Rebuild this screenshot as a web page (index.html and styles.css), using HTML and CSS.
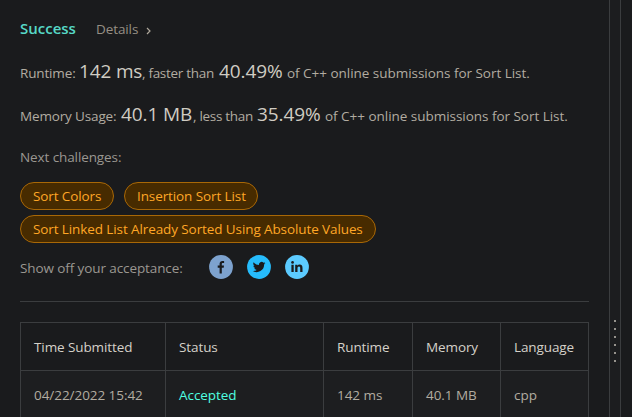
FILE: index.html
```html
<!DOCTYPE html>
<html lang="en">
<head>
<meta charset="utf-8">
<title>Submission result</title>
<link rel="stylesheet" href="styles.css">
</head>
<body>
<div class="layout">
  <main class="result">
    <header class="head"><span class="success">Success</span><a class="details">Details</a><svg class="chevron" width="6" height="8" viewBox="0 0 6 8"><path d="M1 1 4 4 1 7" fill="none" stroke="currentColor" stroke-width="1.2"/></svg></header>
    <p class="stat runtime"><span class="label">Runtime:</span><strong>142 ms</strong><span class="compare">, faster than</span><strong class="percent">40.49%</strong><span>of C++ online submissions for Sort List.</span></p>
    <p class="stat memory"><span class="label">Memory Usage:</span><strong>40.1 MB</strong><span class="compare">, less than</span><strong class="percent">35.49%</strong><span>of C++ online submissions for Sort List.</span></p>
    <p class="next">Next challenges:</p>
    <div class="tags">
      <a class="tag colors">Sort Colors</a>
      <a class="tag insertion">Insertion Sort List</a>
      <a class="tag linked">Sort Linked List Already Sorted Using Absolute Values</a>
    </div>
    <div class="share">
      <span class="share-label">Show off your acceptance:</span>
      <svg class="facebook" width="24" height="24" viewBox="0 0 24 24"><circle cx="12" cy="12" r="11.9"/><path class="glyph" d="M10.6 18.5v-5.8H8.7v-2.2h1.9V8.8c0-1.9 1.1-2.9 2.8-2.9.8 0 1.5.1 1.7.1v2h-1.2c-.9 0-1.1.5-1.1 1.1v1.4H15l-.3 2.2h-1.9v5.8z"/></svg>
      <svg class="twitter" width="24" height="24" viewBox="0 0 24 24"><circle cx="12" cy="12" r="11.9"/><path class="glyph" transform="translate(5.8 5.7) scale(.525)" d="M24 4.6a10 10 0 0 1-2.8.8 5 5 0 0 0 2.2-2.7 10 10 0 0 1-3.1 1.2 4.9 4.9 0 0 0-8.4 4.5A14 14 0 0 1 1.7 3.1 4.9 4.9 0 0 0 3.2 9.7a5 5 0 0 1-2.2-.6 4.9 4.9 0 0 0 3.9 4.9 5 5 0 0 1-2.2.1 4.9 4.9 0 0 0 4.6 3.4A9.9 9.9 0 0 1 0 19.5a14 14 0 0 0 21.5-12.4A10 10 0 0 0 24 4.6z"/></svg>
      <svg class="linkedin" width="24" height="24" viewBox="0 0 24 24"><circle cx="12" cy="12" r="11.9"/><path class="glyph" d="M6.400 9.800h2.300v7.100H6.400zM10.200 9.800h2.200v1c.5-.8 1.200-1.200 2.200-1.200 2.300 0 2.900 1.500 2.900 3.500v3.800h-2.300v-3.400c0-.8 0-1.900-1.200-1.900s-1.500.9-1.500 1.800v3.500h-2.300z"/><circle class="glyph" cx="7.550" cy="7.400" r="1.350"/></svg>
    </div>
    <hr>
    <table>
      <colgroup><col class="c1"><col class="c2"><col class="c3"><col class="c4"><col class="c5"></colgroup>
      <thead><tr><th>Time Submitted</th><th>Status</th><th>Runtime</th><th>Memory</th><th>Language</th></tr></thead>
      <tbody><tr><td>04/22/2022 15:42</td><td class="accepted">Accepted</td><td>142 ms</td><td>40.1 MB</td><td>cpp</td></tr></tbody>
    </table>
  </main>
  <div class="splitter"><i></i><i></i><i></i><i></i><i></i><i></i></div>
  <aside class="editor"></aside>
</div>
</body>
</html>
```
FILE: styles.css
```css
* { box-sizing: border-box; }
body {
  margin: 0;
  overflow: hidden;
  background: #1a1b1d;
  color: #b2aca1;
  font: 13.5px/20px "Open Sans", "Noto Sans", sans-serif;
  letter-spacing: -.1px;
}
.layout { display: flex; height: 417px; overflow: hidden; }
.result { width: 609px; padding: 18px 20px 0; white-space: nowrap; }
.head { display: flex; align-items: center; height: 20px; }
.success { width: 76px; color: #57d9c7; font-size: 15px; font-weight: 600; letter-spacing: 0; }
.details { width: 50px; padding-top: 1px; color: #968f84; }
.chevron { margin-top: 5px; color: #aea79b; }
p { margin: 0; }
.stat { display: flex; align-items: baseline; height: 30px; line-height: 30px; letter-spacing: -.03px; }
.runtime { margin-top: 18px; }
.memory { margin-top: 13px; }
.stat strong { width: 63px; color: #d0ccc3; font-size: 19px; font-weight: 400; letter-spacing: -.15px; }
.stat .label { letter-spacing: -.15px; }
.stat .compare { letter-spacing: -.3px; }
.runtime .label { width: 59px; }
.runtime .compare { width: 77px; }
.memory .label { width: 101px; }
.memory strong { width: 72px; letter-spacing: -.1px; }
.memory .compare { width: 64px; }
.stat .percent { width: 68px; letter-spacing: -.1px; }
.next { margin-top: 18px; color: #9a9791; }
.tags { display: flex; flex-wrap: wrap; gap: 5px 10px; margin-top: 15px; }
.tag {
  height: 28px;
  padding: 0 12px;
  border: 1px solid #a96806;
  border-radius: 14px;
  background: #472b00;
  color: #ffa726;
  line-height: 26px;
}
.colors { width: 94px; }
.insertion { width: 134px; }
.linked { width: 356px; }
.share { display: flex; align-items: center; height: 24px; margin-top: 12px; color: #9a9791; }
.share-label { width: 189px; padding-top: 1px; }
.share svg { margin-right: 14px; }
.facebook { fill: #7da2ce; }
.twitter { fill: #26bcfc; }
.linkedin { fill: #5ccbff; }
.glyph { fill: #1a1b1d; }
hr { height: 1px; margin: 22px 0 20px; border: 0; background: #3b3d3f; }
table { width: 569px; border-collapse: separate; border-spacing: 0; border: solid #3b3d3f; border-width: 1px 0 0 1px; table-layout: fixed; }
th, td { height: 48px; padding: 0 13px; border: solid #3b3d3f; border-width: 0 1px 1px 0; text-align: left; font-weight: 400; }
th { color: #d5d1c9; }
td { background: #1d1e20; letter-spacing: -.05px; }
.c1 { width: 145px; }
.c2 { width: 158px; }
.c3 { width: 89px; }
.c4 { width: 88px; }
.c5 { width: 88px; }
.accepted { color: #4fffe0; font-weight: 500; }
.splitter { display: flex; flex-direction: column; align-items: center; gap: 6px; width: 12px; padding-top: 320px; border: solid #3b3d3f; border-width: 0 1px; background: #1c1d1f; }
.splitter i { width: 2px; height: 2px; background: #96938d; }
.editor { flex: 1; background: #1a1b1d; }
```
